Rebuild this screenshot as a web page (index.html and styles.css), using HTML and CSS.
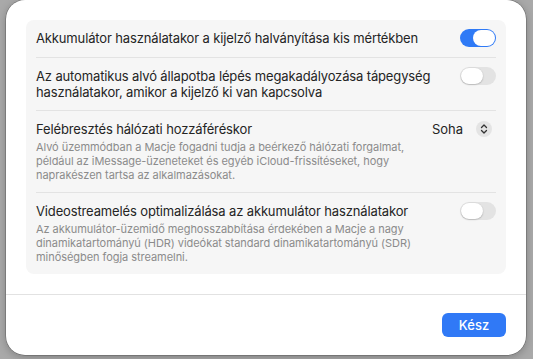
FILE: index.html
```html
<!DOCTYPE html>
<html lang="hu">
  <head>
    <meta charset="UTF-8" />
    <meta name="viewport" content="width=device-width, initial-scale=1.0" />
    <title>Akkumulátor beállítások</title>
    <link rel="stylesheet" href="styles.css">
  </head>
  <body>
    <div class="sheet">
      <div class="sheet-content">
        <div class="group">
          <div class="row">
            <div class="row-text">
              <p class="row-title">Akkumulátor használatakor a kijelző halványítása kis mértékben</p>
            </div>
            <span class="toggle on"><span class="knob"></span></span>
          </div>

          <div class="row">
            <div class="row-text">
              <p class="row-title">Az automatikus alvó állapotba lépés megakadályozása tápegység használatakor, amikor a kijelző ki van kapcsolva</p>
            </div>
            <span class="toggle"><span class="knob"></span></span>
          </div>

          <div class="row">
            <div class="row-text">
              <p class="row-title">Felébresztés hálózati hozzáféréskor</p>
              <p class="row-desc">Alvó üzemmódban a Macje fogadni tudja a beérkező hálózati forgalmat, például az iMessage-üzeneteket és egyéb iCloud-frissítéseket, hogy naprakészen tartsa az alkalmazásokat.</p>
            </div>
            <div class="popup">
              <span class="popup-value">Soha</span>
              <span class="stepper">
                <svg width="16" height="16" viewBox="0 0 16 16">
                  <path d="M5.5 6.5 L8 4 L10.5 6.5 M5.5 9.5 L8 12 L10.5 9.5" fill="none" stroke="#333" stroke-width="1.3" stroke-linecap="round" stroke-linejoin="round" />
                </svg>
              </span>
            </div>
          </div>

          <div class="row">
            <div class="row-text">
              <p class="row-title">Videostreamelés optimalizálása az akkumulátor használatakor</p>
              <p class="row-desc">Az akkumulátor-üzemidő meghosszabbítása érdekében a Macje a nagy dinamikatartományú (HDR) videókat standard dinamikatartományú (SDR) minőségben fogja streamelni.</p>
            </div>
            <span class="toggle"><span class="knob"></span></span>
          </div>
        </div>
      </div>

      <div class="sheet-footer">
        <button class="done-btn">Kész</button>
      </div>
    </div>
  </body>
</html>
```

FILE: styles.css
```css
body {
    margin: 0;
    height: 359px;
    overflow: hidden;
    font-family: Inter, "Noto Sans", sans-serif;
    background-color: #a9a9a9;
    -webkit-font-smoothing: antialiased;
}

.sheet {
    width: 520px;
    height: 355px;
    margin-left: 6px;
    background: #fff;
    border-radius: 19px;
    box-shadow: 0 0 0 0.5px rgba(0, 0, 0, 0.35), 0 2px 8px rgba(0, 0, 0, 0.25);
    display: flex;
    flex-direction: column;
    overflow: hidden;
}

.sheet-content {
    padding: 20px 20px 20px;
}

.group {
    background: #f6f6f6;
    border-radius: 8px;
    padding: 0 10px;
}

.row {
    display: flex;
    align-items: flex-start;
    padding: 10px 0;
    border-bottom: 1px solid #e3e3e3;
}

.row:last-child {
    border-bottom: none;
}

.row-text {
    flex: 0 1 405px;
    min-width: 0;
}

.row-title {
    margin: 0;
    font-size: 13px;
    line-height: 16px;
    letter-spacing: -0.14px;
    color: #242424;
}

.row-desc {
    margin: 3px 0 0;
    font-size: 11px;
    line-height: 14px;
    letter-spacing: -0.05px;
    color: #8b8b8b;
}

/* switches */

.toggle {
    margin-left: auto;
    margin-top: -1px;
    width: 36px;
    height: 18px;
    border-radius: 9px;
    background: #e3e3e3;
    position: relative;
    flex-shrink: 0;
}

.toggle .knob {
    position: absolute;
    top: 1px;
    left: 1px;
    width: 22px;
    height: 16px;
    border-radius: 8px;
    background: #fff;
    box-shadow: 0 0.5px 1.5px rgba(0, 0, 0, 0.3);
}

.toggle.on {
    background: #2f7af6;
}

.toggle.on .knob {
    left: auto;
    right: 1px;
    box-shadow: none;
}

/* popup button */

.popup {
    margin-left: auto;
    margin-right: 4px;
    display: flex;
    align-items: center;
    gap: 13px;
    flex-shrink: 0;
}

.popup-value {
    font-size: 13px;
    line-height: 16px;
    color: #242424;
}

.stepper {
    width: 16px;
    height: 16px;
    border-radius: 50%;
    background: #e4e4e4;
    display: flex;
}

/* footer */

.sheet-footer {
    flex: 1;
    border-top: 1px solid #e2e2e2;
    display: flex;
    align-items: center;
    justify-content: flex-end;
    padding: 0 20px;
}

.done-btn {
    width: 64px;
    height: 24px;
    border: none;
    border-radius: 6px;
    background: #3079f6;
    color: #fff;
    font-family: Inter, "Noto Sans", sans-serif;
    font-size: 13px;
    font-weight: 500;
    cursor: pointer;
}
```
